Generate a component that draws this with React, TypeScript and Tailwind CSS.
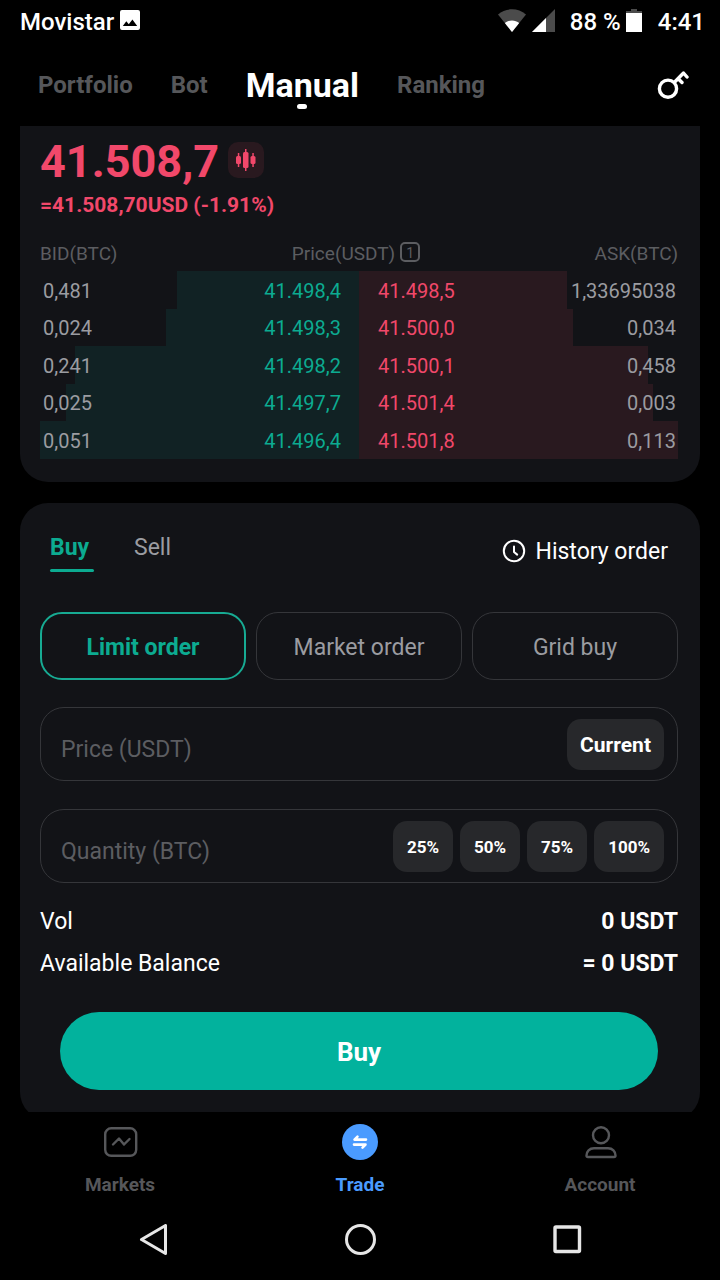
import React from 'react';

type DepthRow = {
  bidQty: string;
  bid: string;
  ask: string;
  askQty: string;
  bidDepth: number;
  askDepth: number;
};

// Depth values are the share of the half row that the bar covers
const depthRows: DepthRow[] = [
  { bidQty: '0,481', bid: '41.498,4', ask: '41.498,5', askQty: '1,33695038', bidDepth: 57, askDepth: 65 },
  { bidQty: '0,024', bid: '41.498,3', ask: '41.500,0', askQty: '0,034', bidDepth: 60.5, askDepth: 67 },
  { bidQty: '0,241', bid: '41.498,2', ask: '41.500,1', askQty: '0,458', bidDepth: 89, askDepth: 90.5 },
  { bidQty: '0,025', bid: '41.497,7', ask: '41.501,4', askQty: '0,003', bidDepth: 92, askDepth: 92 },
  { bidQty: '0,051', bid: '41.496,4', ask: '41.501,8', askQty: '0,113', bidDepth: 100, askDepth: 100 },
];

const percents = ['25%', '50%', '75%', '100%'];

const depthBackground = (row: DepthRow) => {
  const start = 50 - row.bidDepth / 2;
  const end = 50 + row.askDepth / 2;
  return `linear-gradient(to right, transparent ${start}%, #112224 ${start}%, #112224 calc(50% - 1px), #121317 calc(50% - 1px), #121317 50%, #29191f 50%, #29191f ${end}%, transparent ${end}%)`;
};

const StatusBar: React.FC = () => (
  <div className="flex h-11 shrink-0 items-center justify-between pl-5 pr-[15px] text-2xl font-medium leading-7">
    <div className="flex items-center gap-[6px]">
      <span>Movistar</span>
      <svg width="20" height="20" viewBox="0 0 20 20" className="mb-1" aria-hidden="true">
        <path
          fill="#fff"
          fillRule="evenodd"
          d="M2 0h16a2 2 0 0 1 2 2v16a2 2 0 0 1-2 2H2a2 2 0 0 1-2-2V2a2 2 0 0 1 2-2zm.8 16h14.400l-4.800-6.400-3.600 4.700-2.500-3z"
        />
      </svg>
    </div>
    <div className="flex items-center">
      <svg width="28" height="23" viewBox="0 0 28 23" className="mb-1 mr-[6px]" aria-hidden="true">
        <path fill="#4b4b4b" d="M14 23 0 5.500C4 2 9 .3 14 .3S24 2 28 5.500z" />
        <path fill="#fff" d="M14 23 6.800 14c2-1.600 4.500-2.500 7.200-2.500s5.200.9 7.200 2.500z" />
      </svg>
      <svg width="23" height="23" viewBox="0 0 23 23" className="mb-1 mr-[15px]" aria-hidden="true">
        <path fill="#4b4b4b" d="M23 0v23H0z" />
        <path fill="#fff" d="M14 9v14H0z" />
      </svg>
      <span>88 %</span>
      <svg width="16" height="23" viewBox="0 0 16 23" className="mb-1 ml-[5px] mr-4" aria-hidden="true">
        <path fill="#4b4b4b" d="M5 0h6v2h5v3H0V2h5z" />
        <path fill="#fff" d="M0 4h16v19H0z" />
      </svg>
      <span>4:41</span>
    </div>
  </div>
);

const TopTabs: React.FC = () => (
  <header className="flex h-[82px] shrink-0 items-center justify-between pl-[38px] pr-[31px]">
    <nav className="flex items-center gap-[38px] text-2xl font-bold text-[#56575a]">
      <a href="#portfolio">Portfolio</a>
      <a href="#bot">Bot</a>
      <a href="#manual" className="relative text-[34px] leading-10 text-white" aria-current="page">
        Manual
        <span className="absolute -bottom-1 left-1/2 h-[5px] w-[10px] -translate-x-1/2 rounded-full bg-white" />
      </a>
      <a href="#ranking">Ranking</a>
    </nav>
    <button type="button" aria-label="API key">
      <svg width="32" height="30" viewBox="0 0 32 30" fill="none" stroke="#fff" strokeWidth="3.400" aria-hidden="true">
        <circle cx="11" cy="18.700" r="8.600" />
        <path strokeLinecap="round" strokeLinejoin="round" d="M17.500 12.200 26.500 3l3.500 4M21.500 9l3.500 3.500" />
      </svg>
    </button>
  </header>
);

const OrderBook: React.FC = () => (
  <section className="rounded-b-[28px] bg-[#121317] pb-[23px] pl-5 pr-[22px] pt-[9px]">
    <div className="flex items-center gap-[9px]">
      <h1 className="text-[45px] font-bold leading-[54px] text-[#f1486a]">41.508,7</h1>
      <button
        type="button"
        aria-label="Open chart"
        className="mb-[5px] flex size-9 items-center justify-center rounded-[10px] bg-[#29191f]"
      >
        <svg width="20" height="22" viewBox="0 0 20 22" aria-hidden="true">
          <g fill="#f1486a">
            <rect x="0" y="7" width="5" height="8" rx="1.500" />
            <rect x="1.800" y="4" width="1.500" height="14" />
            <rect x="7" y="3" width="5.500" height="16" rx="1.500" />
            <rect x="9" y="0" width="1.500" height="22" />
            <rect x="14.500" y="7" width="5" height="8" rx="1.500" />
            <rect x="16.300" y="4" width="1.500" height="14" />
          </g>
        </svg>
      </button>
    </div>
    <p className="mt-1 text-[21px] font-bold leading-6 text-[#f1486a]">=41.508,70USD (-1.91%)</p>

    <table className="mt-5 w-full table-fixed border-collapse text-xl leading-6">
      <thead className="text-[19px] text-[#5c5d61]">
        <tr className="h-[34px]">
          <th scope="col" className="w-1/4 text-left font-normal">
            BID(BTC)
          </th>
          <th scope="col" colSpan={2} className="pr-[6px] font-normal">
            <span className="flex items-center justify-center gap-[5px]">
              Price(USDT)
              <span className="mb-1 flex size-5 items-center justify-center rounded-[5px] border-2 border-[#5c5d61] pt-px text-[14px] leading-4">
                1
              </span>
            </span>
          </th>
          <th scope="col" className="w-1/4 text-right font-normal">
            ASK(BTC)
          </th>
        </tr>
      </thead>
      <tbody className="text-[#9b9ca1]">
        {depthRows.map((row) => (
          <tr key={row.bid} className="h-[37px] odd:h-[38px]" style={{ background: depthBackground(row) }}>
            <td className="pl-[3px] pt-px">{row.bidQty}</td>
            <td className="pr-[18px] pt-px text-right text-[#0cab91]">{row.bid}</td>
            <td className="pl-[19px] pt-px text-[#f1486a]">{row.ask}</td>
            <td className="pr-[2px] pt-px text-right">{row.askQty}</td>
          </tr>
        ))}
      </tbody>
    </table>
  </section>
);

const OrderForm: React.FC = () => (
  <form
    className="mt-[21px] rounded-[28px] bg-[#121317] pb-[30px] pl-5 pr-[22px] pt-[29px]"
    onSubmit={(e) => e.preventDefault()}
  >
    <div className="flex items-center justify-between px-[10px] text-[23px] leading-8">
      <div className="flex gap-10">
        <button type="button" className="w-11 text-left font-bold text-[#0cab91]">
          Buy
          <span className="mt-[5px] block h-[3px] rounded-full bg-[#0cab91]" />
        </button>
        <button type="button" className="pb-2 text-[#9b9ca1]">
          Sell
        </button>
      </div>
      <a href="#history" className="flex items-center gap-[9px]">
        <svg width="24" height="24" viewBox="0 0 24 24" className="mb-[3px]" fill="none" stroke="#fff" strokeWidth="2" aria-hidden="true">
          <circle cx="12" cy="12" r="10.200" />
          <path strokeLinecap="round" strokeLinejoin="round" d="M12 7.500V13l3.200 2.600" />
        </svg>
        History order
      </a>
    </div>

    <div className="mt-10 grid grid-cols-3 gap-[10px] text-[23px] leading-8">
      <button type="button" className="h-[68px] rounded-[22px] border-2 border-[#17ab93] pt-[3px] font-bold text-[#0cab91]">
        Limit order
      </button>
      <button type="button" className="h-[68px] rounded-[22px] border border-[#35363a] pt-[3px] text-[#9b9ca1]">
        Market order
      </button>
      <button type="button" className="h-[68px] rounded-[22px] border border-[#35363a] pt-[3px] text-[#9b9ca1]">
        Grid buy
      </button>
    </div>

    <div className="mt-[27px] flex h-[74px] items-center rounded-3xl border border-[#35363a] pr-[13px]">
      <input
        type="text"
        aria-label="Price (USDT)"
        placeholder="Price (USDT)"
        className="h-full min-w-0 flex-1 bg-transparent pl-5 pt-[10px] text-[23px] outline-none placeholder:text-[#5c5d61]"
      />
      <button type="button" className="h-[51px] rounded-[14px] bg-[#27282b] px-[13px] pt-[3px] text-[21px] font-bold">
        Current
      </button>
    </div>

    <div className="mt-7 flex h-[74px] items-center gap-[7px] rounded-3xl border border-[#35363a] pr-[13px]">
      <input
        type="text"
        aria-label="Quantity (BTC)"
        placeholder="Quantity (BTC)"
        className="h-full min-w-0 flex-1 bg-transparent pl-5 pt-[10px] text-[23px] outline-none placeholder:text-[#5c5d61]"
      />
      {percents.map((percent) => (
        <button
          key={percent}
          type="button"
          className="h-[51px] rounded-[14px] bg-[#27282b] px-[14px] pt-[3px] text-[17px] font-bold"
        >
          {percent}
        </button>
      ))}
    </div>

    <dl className="mt-[18px] text-[23px] leading-[42px]">
      <div className="flex justify-between">
        <dt>Vol</dt>
        <dd className="font-bold">0 USDT</dd>
      </div>
      <div className="flex justify-between">
        <dt>Available Balance</dt>
        <dd className="font-bold">= 0 USDT</dd>
      </div>
    </dl>

    <div className="mt-[27px] px-5">
      <button type="submit" className="h-[78px] w-full rounded-full bg-[#02b29d] pt-[2px] text-[26px] font-bold">
        Buy
      </button>
    </div>
  </form>
);

const BottomNav: React.FC = () => (
  <nav className="grid h-[88px] shrink-0 grid-cols-3 pt-3 text-[19px] font-bold leading-6 text-[#56575a]">
    <a href="#markets" className="flex flex-col items-center gap-[13px]">
      <svg width="36" height="36" viewBox="0 0 36 36" fill="none" stroke="currentColor" strokeWidth="2.400" aria-hidden="true">
        <rect x="3.200" y="4.300" width="31" height="27.500" rx="6" />
        <path strokeLinecap="round" strokeLinejoin="round" d="m11 20.500 6-6 5 6 5.500-5.500" />
      </svg>
      Markets
    </a>
    <a href="#trade" className="flex flex-col items-center gap-[13px] text-[#4a9bff]" aria-current="page">
      <svg width="36" height="36" viewBox="0 0 36 36" aria-hidden="true">
        <circle cx="18" cy="18" r="18" fill="currentColor" />
        <g fill="none" stroke="#fff" strokeWidth="2.600" strokeLinecap="round" strokeLinejoin="round">
          <path d="M24 15.600H12.500l3-3M12 20.600h11.500l-3 3" />
        </g>
      </svg>
      Trade
    </a>
    <a href="#account" className="flex flex-col items-center gap-[13px]">
      <svg width="36" height="36" viewBox="0 0 36 36" fill="none" stroke="currentColor" strokeWidth="2.400" aria-hidden="true">
        <circle cx="19" cy="11.200" r="8" />
        <path strokeLinejoin="round" d="M12 24.300h14c4.500 0 7.500 3.200 7.500 7.200 0 1-.5 1.500-1.500 1.500H6c-1 0-1.500-.5-1.500-1.500 0-4 3-7.200 7.500-7.200z" />
      </svg>
      Account
    </a>
  </nav>
);

const SystemNav: React.FC = () => (
  <div className="grid h-20 shrink-0 grid-cols-3 px-[50px]">
    <button type="button" aria-label="Back" className="flex items-center justify-center">
      <svg width="32" height="32" viewBox="0 0 32 32" fill="none" stroke="#e6e6e6" strokeWidth="3" aria-hidden="true">
        <path strokeLinejoin="round" d="M28.500 1.500v28L4.500 15.500z" />
      </svg>
    </button>
    <button type="button" aria-label="Home" className="flex items-center justify-center">
      <svg width="32" height="32" viewBox="0 0 32 32" fill="none" stroke="#e6e6e6" strokeWidth="3" aria-hidden="true">
        <circle cx="16.500" cy="15.500" r="14" />
      </svg>
    </button>
    <button type="button" aria-label="Recent apps" className="flex items-center justify-center">
      <svg width="32" height="32" viewBox="0 0 32 32" fill="none" stroke="#e6e6e6" strokeWidth="3.400" aria-hidden="true">
        <rect x="4" y="3" width="24.500" height="24.500" rx="1" />
      </svg>
    </button>
  </div>
);

const App: React.FC = () => {
  return (
    <div className="flex h-screen flex-col bg-black font-[Roboto,sans-serif] text-white">
      <StatusBar />
      <TopTabs />
      <main className="min-h-0 flex-1 overflow-y-auto px-5 [scrollbar-width:none]">
        <OrderBook />
        <OrderForm />
      </main>
      <BottomNav />
      <SystemNav />
    </div>
  );
};

export default App;
